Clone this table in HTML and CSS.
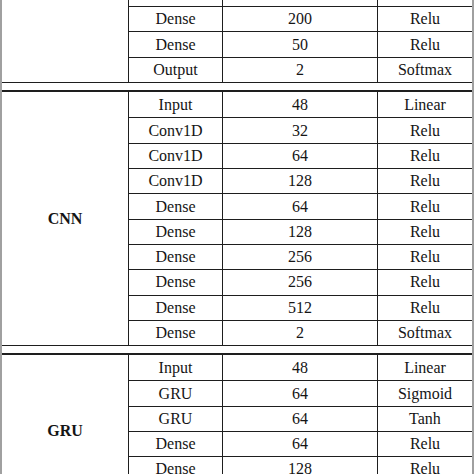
FILE: index.html
```html
<!DOCTYPE html>
<html lang="en">
<head>
<meta charset="utf-8">
<title>Model architectures</title>
<link rel="stylesheet" href="styles.css">
</head>
<body>
<div class="tbl">
  <div class="sec sec-top">
    <div class="cell label"></div>
    <div class="cell"></div><div class="cell"></div><div class="cell act"></div>
    <div class="cell">Dense</div><div class="cell">200</div><div class="cell act">Relu</div>
    <div class="cell">Dense</div><div class="cell">50</div><div class="cell act">Relu</div>
    <div class="cell">Output</div><div class="cell">2</div><div class="cell act">Softmax</div>
  </div>

  <div class="sec sec-cnn">
    <div class="cell label">CNN</div>
    <div class="cell">Input</div><div class="cell">48</div><div class="cell act">Linear</div>
    <div class="cell">Conv1D</div><div class="cell">32</div><div class="cell act">Relu</div>
    <div class="cell">Conv1D</div><div class="cell">64</div><div class="cell act">Relu</div>
    <div class="cell">Conv1D</div><div class="cell">128</div><div class="cell act">Relu</div>
    <div class="cell">Dense</div><div class="cell">64</div><div class="cell act">Relu</div>
    <div class="cell">Dense</div><div class="cell">128</div><div class="cell act">Relu</div>
    <div class="cell">Dense</div><div class="cell">256</div><div class="cell act">Relu</div>
    <div class="cell">Dense</div><div class="cell">256</div><div class="cell act">Relu</div>
    <div class="cell">Dense</div><div class="cell">512</div><div class="cell act">Relu</div>
    <div class="cell">Dense</div><div class="cell">2</div><div class="cell act">Softmax</div>
  </div>

  <div class="sec sec-gru">
    <div class="cell label">GRU</div>
    <div class="cell">Input</div><div class="cell">48</div><div class="cell act">Linear</div>
    <div class="cell">GRU</div><div class="cell">64</div><div class="cell act">Sigmoid</div>
    <div class="cell">GRU</div><div class="cell">64</div><div class="cell act">Tanh</div>
    <div class="cell">Dense</div><div class="cell">64</div><div class="cell act">Relu</div>
    <div class="cell">Dense</div><div class="cell">128</div><div class="cell act">Relu</div>
    <div class="cell">Dense</div><div class="cell">2</div><div class="cell act">Softmax</div>
  </div>
</div>
</body>
</html>
```

FILE: styles.css
```css
html, body {
  margin: 0;
  padding: 0;
  background: #ffffff;
  overflow: hidden;
}

body {
  font-family: "Liberation Serif", "Times New Roman", serif;
  font-size: 16px;
  color: #151515;
}

.tbl {
  width: 474px;
  box-sizing: border-box;
  border-left: 2px solid #a0a0a0;
  border-right: 2px solid #a0a0a0;
  margin-top: -18.4px;
}

.sec {
  display: grid;
  grid-template-columns: 127px 94px 155px 94px;
}

.sec-top {
  grid-template-rows: repeat(4, 25.4px);
}

.sec-cnn {
  margin-top: 6.8px;
  border-top: 2px solid #1e1e1e;
  grid-template-rows: 26.5px repeat(9, 25.3px);
}

.sec-gru {
  margin-top: 6.8px;
  border-top: 2px solid #1e1e1e;
  grid-template-rows: 26.5px repeat(5, 25.3px);
}

.cell {
  box-sizing: border-box;
  display: flex;
  align-items: center;
  justify-content: center;
  border-right: 1px solid #1e1e1e;
  border-bottom: 1px solid #1e1e1e;
  white-space: nowrap;
}

.cell.act {
  border-right: none;
}

.label {
  grid-column: 1;
  grid-row: 1 / -1;
  font-weight: bold;
}
```
